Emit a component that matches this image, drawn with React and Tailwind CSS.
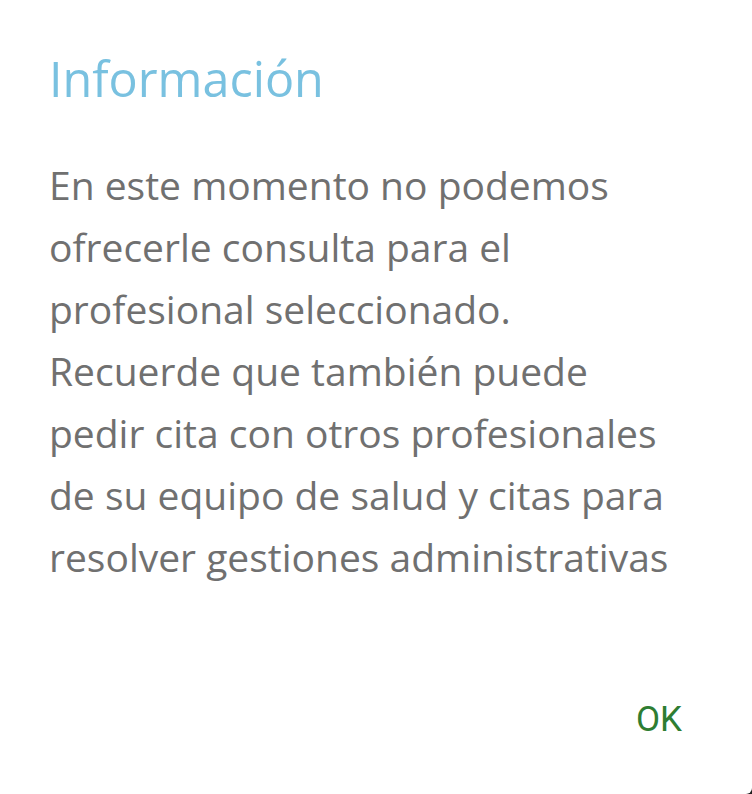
import React from 'react';

const LINES = [
    'En este momento no podemos',
    'ofrecerle consulta para el',
    'profesional seleccionado.',
    'Recuerde que también puede',
    'pedir cita con otros profesionales',
    'de su equipo de salud y citas para',
    'resolver gestiones administrativas',
];

const InfoDialog = () => {
    return (
        <div className="w-[752px] h-[794px] bg-[#1f1f1f] overflow-hidden">
            <div className="w-full h-full bg-white rounded-br-[6px] flex flex-col">
                {/* Title */}
                <h2 className="pl-[49px] pt-[46px] text-[48.5px] leading-[64px] text-[#79c1e0]" style={{ fontFamily: '"Open Sans", sans-serif' }}>
                    Información
                </h2>

                {/* Body */}
                <p className="pl-[49px] mt-[44px] text-[39px] leading-[62px] text-[#707070]" style={{ fontFamily: '"Open Sans", sans-serif' }}>
                    {LINES.map((line) => (
                        <span key={line} className="block whitespace-nowrap">{line}</span>
                    ))}
                </p>

                {/* Actions */}
                <div className="mt-auto flex justify-end pr-[70px] pb-[52px]">
                    <button className="text-[35px] leading-[44px] text-[#2e7d32] uppercase" style={{ fontFamily: 'Roboto, sans-serif' }}>
                        OK
                    </button>
                </div>
            </div>
        </div>
    );
};

export default InfoDialog;
